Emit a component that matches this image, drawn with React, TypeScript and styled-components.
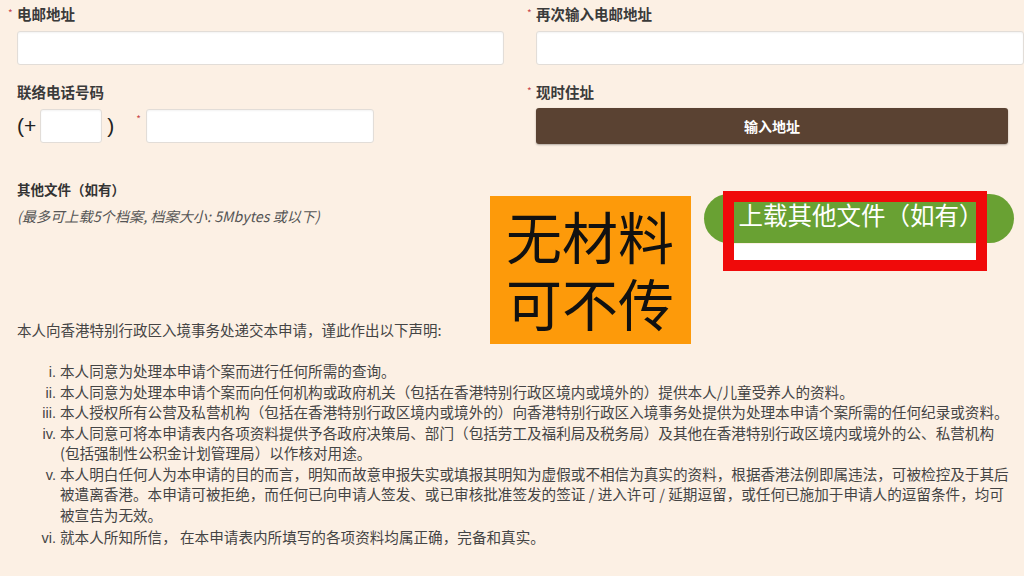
import styled, { createGlobalStyle } from 'styled-components';

const GlobalStyle = createGlobalStyle`
  html, body {
    margin: 0;
    padding: 0;
    background: #fcf0e4;
  }
  body {
    font-family: "Noto Sans CJK SC", "Liberation Sans", sans-serif;
    color: #333;
  }
`;

const declarations = [
  '本人同意为处理本申请个案而进行任何所需的查询。',
  '本人同意为处理本申请个案而向任何机构或政府机关（包括在香港特别行政区境内或境外的）提供本人/儿童受养人的资料。',
  '本人授权所有公营及私营机构（包括在香港特别行政区境内或境外的）向香港特别行政区入境事务处提供为处理本申请个案所需的任何纪录或资料。',
  [
    '本人同意可将本申请表内各项资料提供予各政府决策局、部门（包括劳工及福利局及税务局）及其他在香港特别行政区境内或境外的公、私营机构',
    '(包括强制性公积金计划管理局）以作核对用途。',
  ],
  [
    '本人明白任何人为本申请的目的而言，明知而故意申报失实或填报其明知为虚假或不相信为真实的资料，根据香港法例即属违法，可被检控及于其后',
    '被遣离香港。本申请可被拒绝，而任何已向申请人签发、或已审核批准签发的签证 / 进入许可 / 延期逗留，或任何已施加于申请人的逗留条件，均可',
    '被宣告为无效。',
  ],
  '就本人所知所信， 在本申请表内所填写的各项资料均属正确，完备和真实。',
];

export default function App(): JSX.Element {
  return (
    <>
      <GlobalStyle />
      <Page>
        <FormRow>
          <Field>
            <Label><Req>*</Req>电邮地址</Label>
            <TextInput />
          </Field>
          <Field>
            <Label><Req>*</Req>再次输入电邮地址</Label>
            <TextInput />
          </Field>
        </FormRow>

        <FormRow $top={18}>
          <Field>
            <Label>联络电话号码</Label>
            <PhoneLine>
              <Paren>(+</Paren>
              <TextInput $width={62} />
              <Paren $gap>)</Paren>
              <PhoneReq>*</PhoneReq>
              <TextInput $width={228} />
            </PhoneLine>
          </Field>
          <Field>
            <Label><Req>*</Req>现时住址</Label>
            <AddressButton>输入地址</AddressButton>
          </Field>
        </FormRow>

        <FormRow $top={36}>
          <Field>
            <SectionTitle>其他文件（如有）</SectionTitle>
            <Note>(最多可上载5个档案, 档案大小: 5Mbytes 或以下)</Note>
          </Field>
          <UploadCell>
            <UploadWrap>
              <UploadButton>上载其他文件（如有）</UploadButton>
              <RedMark>
                <WhiteStrip />
              </RedMark>
            </UploadWrap>
          </UploadCell>
        </FormRow>

        <Intro>本人向香港特别行政区入境事务处递交本申请，谨此作出以下声明:</Intro>
        <DeclList>
          {declarations.map((item, i) => (
            <DeclItem key={i} $extra={i === 5}>
              {Array.isArray(item)
                ? item.map((line, j) => (
                  <span key={j}>
                    {j > 0 && <br />}
                    {line}
                  </span>
                ))
                : item}
            </DeclItem>
          ))}
        </DeclList>

        <Sticker>
          无材料
          <br />
          可不传
        </Sticker>
      </Page>
    </>
  );
}

const Page = styled.div`
  position: relative;
  width: 1024px;
  height: 576px;
  overflow: hidden;
  box-sizing: border-box;
  padding: 5px 0 0 17px;
`;

const FormRow = styled.div<{ $top?: number }>`
  display: grid;
  grid-template-columns: 487px 488px;
  column-gap: 32px;
  margin-top: ${(p) => p.$top || 0}px;
`;

const Field = styled.div`
  display: flex;
  flex-direction: column;
  align-items: flex-start;
`;

const Label = styled.div`
  position: relative;
  font-size: 14.5px;
  line-height: 18px;
  font-weight: bold;
  color: #3a3a3a;
  margin-bottom: 8px;
`;

const Req = styled.span`
  position: absolute;
  left: -9px;
  top: -1px;
  font-size: 10px;
  font-weight: normal;
  color: #c9484c;
`;

const TextInput = styled.div<{ $width?: number }>`
  box-sizing: border-box;
  width: ${(p) => (p.$width ? `${p.$width}px` : '100%')};
  height: 34px;
  background: #fff;
  border: 1px solid #e2ddd8;
  border-radius: 3px;
  box-shadow: inset 0 1px 2px rgba(0, 0, 0, 0.05);
  flex-shrink: 0;
`;

const PhoneLine = styled.div`
  display: flex;
  align-items: center;
`;

const Paren = styled.span<{ $gap?: boolean }>`
  font-family: "Liberation Sans", sans-serif;
  font-size: 21px;
  color: #222;
  margin: ${(p) => (p.$gap ? '0 22px 0 5px' : '0 4px 0 0')};
`;

const PhoneReq = styled.span`
  align-self: flex-start;
  margin: 2px 5px 0 0;
  font-size: 10px;
  color: #c9484c;
`;

const AddressButton = styled.div`
  width: 472px;
  height: 36px;
  margin-top: -1px;
  display: flex;
  align-items: center;
  justify-content: center;
  background: #5a4232;
  border-radius: 3px;
  box-shadow: 0 1px 2px rgba(0, 0, 0, 0.3);
  color: #fff;
  font-size: 14px;
  font-weight: bold;
`;

const SectionTitle = styled.div`
  font-size: 13.5px;
  line-height: 18px;
  font-weight: bold;
  color: #333;
`;

const Note = styled.div`
  margin-top: 9px;
  font-size: 14.2px;
  line-height: 18px;
  font-style: italic;
  color: #555;
`;

const UploadCell = styled.div`
  padding: 14px 0 0 168px;
`;

const UploadWrap = styled.div`
  position: relative;
  width: 310px;
`;

const UploadButton = styled.div`
  height: 49px;
  box-sizing: border-box;
  padding: 0 0 9px 4px;
  display: flex;
  align-items: center;
  justify-content: center;
  background: #69a133;
  border-radius: 25px;
  color: #fff;
  font-size: 24.5px;
  white-space: nowrap;
`;

const RedMark = styled.div`
  position: absolute;
  left: 19px;
  top: -3px;
  width: 264px;
  height: 80px;
  box-sizing: border-box;
  border: 11px solid #f00a0a;
`;

const WhiteStrip = styled.div`
  position: absolute;
  left: 0;
  right: 0;
  bottom: 0;
  height: 16px;
  background: #fff;
`;

const Intro = styled.div`
  margin-top: 78px;
  font-size: 14.5px;
  line-height: 18px;
  color: #444;
`;

const DeclList = styled.ol`
  list-style: lower-roman;
  margin: 22px 0 0;
  padding-left: 43px;
  font-size: 14.6px;
  line-height: 20.5px;
  color: #444;
  white-space: nowrap;
  li::marker {
    font-family: "Liberation Sans", sans-serif;
    font-size: 14.5px;
  }
`;

const DeclItem = styled.li<{ $extra?: boolean }>`
  margin-top: ${(p) => (p.$extra ? '2px' : '0')};
`;

const Sticker = styled.div`
  position: absolute;
  left: 490px;
  top: 196px;
  width: 201px;
  height: 148px;
  box-sizing: border-box;
  padding: 5px 0 0 16px;
  background: #fd9a0a;
  color: #111;
  font-size: 56px;
  line-height: 67px;
`;
